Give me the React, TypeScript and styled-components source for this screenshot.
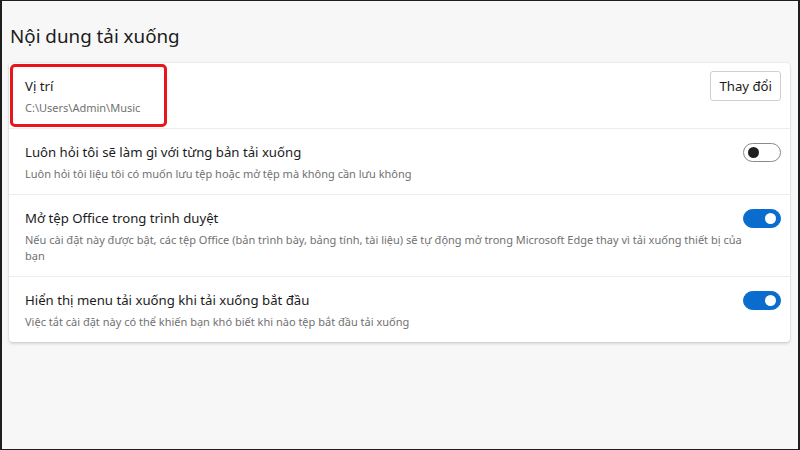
import styled, { createGlobalStyle } from "styled-components"

const Global = createGlobalStyle`
  html, body {
    margin: 0;
    padding: 0;
    background: #f7f7f7;
  }
  body {
    font-family: "Noto Sans", "Open Sans", sans-serif;
    color: #1b1b1b;
  }
`

const Frame = styled.div`
  box-sizing: border-box;
  width: 800px;
  height: 450px;
  border-left: 2px solid #1e1e1e;
  border-right: 2px solid #1e1e1e;
  border-top: 1px solid #1e1e1e;
  border-bottom: 1px solid #1e1e1e;
  background: #f7f7f7;
  padding: 21px 8px 0 7px;
  overflow: hidden;
`

const Title = styled.h2`
  margin: 0 0 13px 1px;
  font-size: 18.8px;
  font-weight: 400;
  line-height: 28px;
  color: #1b1b1b;
`

const Card = styled.div`
  position: relative;
  background: #fff;
  border-radius: 4px;
  box-shadow: 0 0 0 1px rgba(0, 0, 0, 0.03), 0 1.5px 3px rgba(0, 0, 0, 0.13);
`

const Row = styled.div`
  display: flex;
  align-items: flex-start;
  justify-content: space-between;
  padding: 13px 9px 12px 16px;
  & + & {
    border-top: 1px solid #ececec;
  }
`

const Texts = styled.div`
  display: flex;
  flex-direction: column;
  gap: 4px;
  max-width: 720px;
`

const Label = styled.div`
  font-size: 13.2px;
  line-height: 20px;
  color: #1b1b1b;
`

const Sub = styled.div`
  font-size: 11px;
  line-height: 16px;
  color: #717171;
`

const Button = styled.button`
  margin-top: -5px;
  height: 30px;
  padding: 0 8px;
  background: #fff;
  border: 1px solid #cfcfcf;
  border-radius: 3px;
  font-family: inherit;
  font-size: 13.2px;
  color: #1b1b1b;
`

const Toggle = styled.div<{ $on: boolean }>`
  box-sizing: border-box;
  flex: none;
  width: 38px;
  height: 19px;
  margin-top: 1px;
  border-radius: 10px;
  display: flex;
  align-items: center;
  justify-content: ${(p) => (p.$on ? "flex-end" : "flex-start")};
  padding: 0 4px;
  background: ${(p) => (p.$on ? "#0a6ccd" : "#fff")};
  border: 1px solid ${(p) => (p.$on ? "#0a6ccd" : "#8a8a8a")};
  &::after {
    content: "";
    width: 11px;
    height: 11px;
    border-radius: 50%;
    background: ${(p) => (p.$on ? "#fff" : "#1f1f1f")};
  }
`

const Highlight = styled.div`
  position: absolute;
  left: 1px;
  top: 1px;
  width: 157px;
  height: 63px;
  box-sizing: border-box;
  border: 3px solid #e8151b;
  border-radius: 5px;
  pointer-events: none;
`

const rows = [
  {
    label: "Luôn hỏi tôi sẽ làm gì với từng bản tải xuống",
    sub: "Luôn hỏi tôi liệu tôi có muốn lưu tệp hoặc mở tệp mà không cần lưu không",
    on: false,
  },
  {
    label: "Mở tệp Office trong trình duyệt",
    sub: "Nếu cài đặt này được bật, các tệp Office (bản trình bày, bảng tính, tài liệu) sẽ tự động mở trong Microsoft Edge thay vì tải xuống thiết bị của bạn",
    on: true,
  },
  {
    label: "Hiển thị menu tải xuống khi tải xuống bắt đầu",
    sub: "Việc tắt cài đặt này có thể khiến bạn khó biết khi nào tệp bắt đầu tải xuống",
    on: true,
  },
]

export default function App() {
  return (
    <>
      <Global />
      <Frame>
        <Title>Nội dung tải xuống</Title>
        <Card>
          <Row>
            <Texts>
              <Label>Vị trí</Label>
              <Sub>C:\Users\Admin\Music</Sub>
            </Texts>
            <Button>Thay đổi</Button>
          </Row>
          {rows.map((r) => (
            <Row key={r.label}>
              <Texts>
                <Label>{r.label}</Label>
                <Sub>{r.sub}</Sub>
              </Texts>
              <Toggle $on={r.on} />
            </Row>
          ))}
          <Highlight />
        </Card>
      </Frame>
    </>
  )
}
